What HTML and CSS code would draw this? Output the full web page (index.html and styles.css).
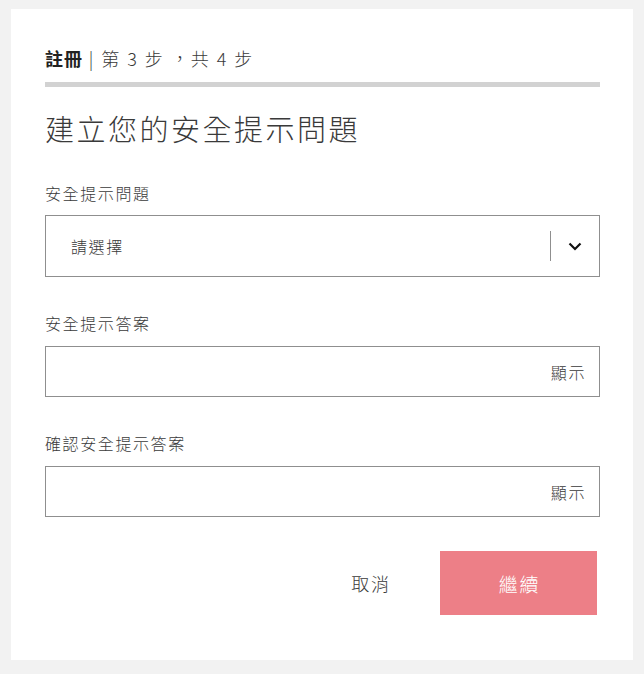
FILE: index.html
```html
<!DOCTYPE html>
<html lang="zh-Hant">
<head>
<meta charset="utf-8">
<title>建立您的安全提示問題</title>
<link rel="stylesheet" href="styles.css">
</head>
<body>
<div class="card">
  <div class="step"><b>註冊</b> | 第 3 步 ，共 4 步</div>
  <div class="bar"></div>
  <h1 class="title">建立您的安全提示問題</h1>

  <div class="field first">
    <div class="label">安全提示問題</div>
    <div class="select">
      <span class="select-text">請選擇</span>
      <span class="divider"></span>
      <span class="chev">
        <svg width="14" height="9" viewBox="0 0 14 9"><path d="M1.5 1.5 L7 7 L12.5 1.5" fill="none" stroke="#111" stroke-width="2.2"/></svg>
      </span>
    </div>
  </div>

  <div class="field">
    <div class="label">安全提示答案</div>
    <div class="input"><span class="show">顯示</span></div>
  </div>

  <div class="field">
    <div class="label">確認安全提示答案</div>
    <div class="input"><span class="show">顯示</span></div>
  </div>

  <div class="actions">
    <span class="cancel">取消</span>
    <span class="continue">繼續</span>
  </div>
</div>
</body>
</html>
```
FILE: styles.css
```css
html, body { margin: 0; padding: 0; }
body {
  background: #f2f2f2;
  font-family: "Noto Sans CJK TC", "Noto Sans", sans-serif;
  color: #3a3a3a;
  padding: 9px 11px 14px 11px;
  letter-spacing: 0.1em;
}
.card {
  background: #fff;
  width: 622px;
  height: 651px;
  box-sizing: border-box;
  padding: 37px 33px 0 34px;
}
.step {
  font-size: 18px;
  line-height: 24px;
  font-weight: 300;
  letter-spacing: 0.11em;
}
.step b { font-weight: 700; color: #222; letter-spacing: 0.05em; }
.bar {
  height: 5px;
  background: #d2d2d2;
  margin-top: 12px;
}
.title {
  margin: 23px 0 0 0;
  font-size: 29px;
  line-height: 36px;
  font-weight: 300;
  letter-spacing: 2.5px;
}
.field { margin-top: 35px; }
.field.first { margin-top: 36px; }
.label {
  font-size: 16px;
  line-height: 22px;
  font-weight: 300;
}
.select {
  margin-top: 11px;
  height: 62px;
  box-sizing: border-box;
  border: 1px solid #8f8f8f;
  display: flex;
  align-items: center;
  padding-left: 25px;
}
.select-text { flex: 1; font-size: 16px; font-weight: 300; }
.divider {
  width: 1px;
  height: 30px;
  background: #8f8f8f;
}
.chev {
  width: 48px;
  display: flex;
  justify-content: center;
  align-items: center;
}
.input {
  margin-top: 12px;
  height: 51px;
  box-sizing: border-box;
  border: 1px solid #8f8f8f;
  display: flex;
  align-items: center;
  justify-content: flex-end;
  padding-right: 13px;
}
.show { font-size: 16px; font-weight: 300; }
.actions {
  margin-top: 34px;
  display: flex;
  justify-content: flex-end;
  align-items: center;
  padding-right: 3px;
}
.cancel {
  font-size: 18px;
  font-weight: 300;
  width: 80px;
  text-align: center;
  margin-right: 30px;
  text-indent: 0.1em;
}
.continue {
  width: 157px;
  height: 64px;
  background: #ed7f87;
  color: #fff;
  font-size: 19px;
  font-weight: 300;
  display: flex;
  align-items: center;
  justify-content: center;
  text-indent: 0.1em;
}
```
